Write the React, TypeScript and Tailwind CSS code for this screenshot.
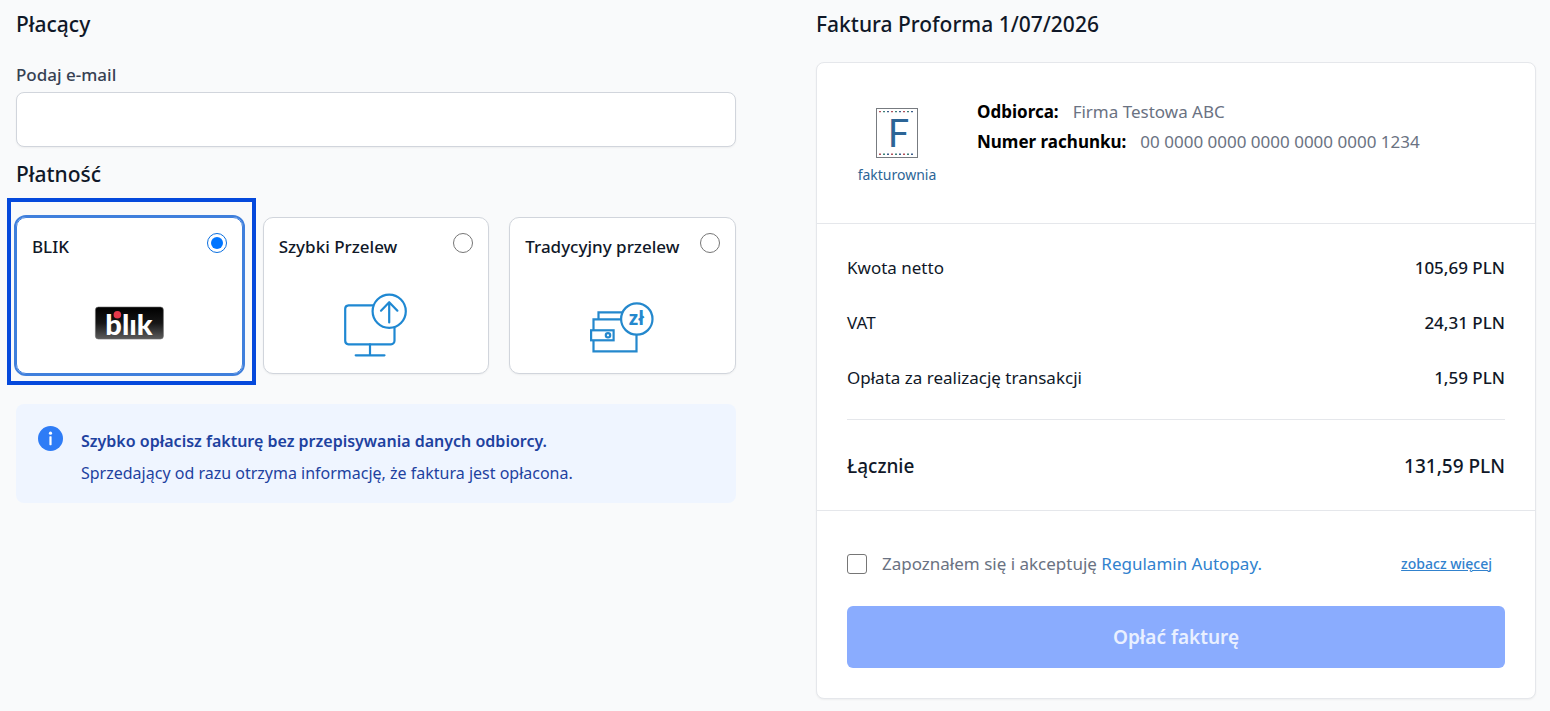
import { useState, type ReactNode } from "react";

function BlikLogo() {
  return (
    <svg width="70" height="38" viewBox="0 0 70 38" role="img" aria-label="BLIK">
      <defs>
        <linearGradient id="blik-bg" x1="0" y1="0" x2="0" y2="1">
          <stop offset="0" stopColor="#000000" />
          <stop offset="0.5" stopColor="#161616" />
          <stop offset="1" stopColor="#5c5c5c" />
        </linearGradient>
      </defs>
      <rect x="1.4" y="1" width="68" height="32" rx="3" fill="url(#blik-bg)" stroke="#6b6b6b" strokeWidth="0.6" />
      <text x="35" y="28.5" textAnchor="middle" fill="#ffffff" fontSize="29" fontWeight="900" fontFamily="Lato, sans-serif">
        blık
      </text>
      <circle cx="23.4" cy="8.8" r="3.8" fill="#e5394a" />
    </svg>
  );
}

function TransferIcon() {
  return (
    <svg width="64" height="64" viewBox="0 0 64 64" fill="none" stroke="#1f88d2" strokeWidth="2.2" strokeLinecap="round" strokeLinejoin="round" aria-hidden="true">
      <path d="M29 12.3H4.5A3.5 3.5 0 0 0 1.2 15.8V47.8A3.5 3.5 0 0 0 4.5 51.3H47A3.5 3.5 0 0 0 50.5 47.8V35" />
      <circle cx="45.2" cy="18.3" r="16.6" />
      <path d="M45.2 29.5V9.5M37 17.7L45.2 9.2L53.4 17.7M26 51.3V62M11.7 62.3H40.5" />
    </svg>
  );
}

function WalletIcon() {
  return (
    <svg width="64" height="64" viewBox="1 0 64 64" fill="none" stroke="#2488cd" strokeWidth="2.2" className="overflow-visible" aria-hidden="true">
      <path d="M8.5 26.3V19.3H32.5" />
      <path d="M31.5 26.3H3.5V58.3H46.5V42" />
      <rect x="1.1" y="37.3" width="22.5" height="10" fill="#ffffff" />
      <circle cx="18" cy="42.3" r="2.2" />
      <circle cx="46.8" cy="26" r="15.7" fill="#ffffff" />
      <text x="46.4" y="32.3" textAnchor="middle" fill="#2488cd" stroke="none" fontSize="19" fontWeight="700" fontFamily="'Noto Sans', sans-serif">
        zł
      </text>
    </svg>
  );
}

function FakturowniaLogo() {
  return (
    <svg width="42" height="50" viewBox="0 0 42 50" fill="none" aria-hidden="true">
      <rect x="0.5" y="0.5" width="41" height="49" stroke="#777b80" />
      <g strokeWidth="1.4">
        <path d="M3 3.6H39M3 46.2H39" stroke="#b0525c" strokeDasharray="2 10" />
        <path d="M7 3.6H39M7 46.2H39" stroke="#3f8078" strokeDasharray="2 10" />
        <path d="M11 3.6H39M11 46.2H39" stroke="#3d5f8d" strokeDasharray="2 10" />
      </g>
      <text x="22.5" y="39" textAnchor="middle" fill="#2c6596" fontSize="38" fontWeight="400" fontFamily="Lato, sans-serif">
        F
      </text>
    </svg>
  );
}

const methods: { id: string; name: string; icon: ReactNode }[] = [
  { id: "blik", name: "BLIK", icon: <BlikLogo /> },
  { id: "fast", name: "Szybki Przelew", icon: <TransferIcon /> },
  { id: "traditional", name: "Tradycyjny przelew", icon: <WalletIcon /> },
];

const amounts = [
  { label: "Kwota netto", value: "105,69 PLN" },
  { label: "VAT", value: "24,31 PLN" },
  { label: "Opłata za realizację transakcji", value: "1,59 PLN" },
];

function PaymentMethods() {
  const [selected, setSelected] = useState("blik");

  return (
    <div className="grid grid-cols-3 gap-5">
      {methods.map((method) => {
        const active = method.id === selected;
        return (
          <div key={method.id} className="relative">
            {/* Highlight frame */}
            {active && <div className="absolute -left-[9px] -right-[13px] -top-[19px] -bottom-[11px] border-4 border-[#0549dc] pointer-events-none" />}
            <label
              className={
                active
                  ? "flex flex-col justify-between h-[157px] px-[15px] pt-[15px] pb-4 rounded-[10px] bg-white border border-[#3f7fdc] outline-2 outline-[#3f7fdc] cursor-pointer"
                  : "flex flex-col justify-between h-[157px] px-[15px] pt-[15px] pb-4 rounded-[10px] bg-white border border-gray-300 shadow-xs cursor-pointer"
              }
            >
              <span className="flex justify-between">
                <span className="text-[17px] leading-7 font-medium text-gray-900 whitespace-nowrap">{method.name}</span>
                <input
                  type="radio"
                  name="method"
                  checked={active}
                  onChange={() => setSelected(method.id)}
                  className="appearance-none shrink-0 w-5 h-5 rounded-full bg-white border border-[#767676] checked:border-[#0a6fe0] checked:bg-[#0075ff] checked:bg-clip-content checked:p-[3px]"
                />
              </span>
              <span className="flex h-16 items-center justify-center">{method.icon}</span>
            </label>
          </div>
        );
      })}
    </div>
  );
}

function Payer() {
  return (
    <section>
      <h2 className="text-[21px] leading-8 font-medium text-gray-900">Płacący</h2>
      <label htmlFor="email" className="block mt-[21px] text-[17px] leading-7 font-medium text-gray-700">
        Podaj e-mail
      </label>
      <input id="email" type="email" className="block w-full h-[55px] mt-[3px] px-4 rounded-lg border border-gray-300 bg-white shadow-xs text-[17px]" />
      <h2 className="mt-[11px] mb-[27px] text-[21px] leading-8 font-medium text-gray-900">Płatność</h2>
      <PaymentMethods />
      <div className="flex gap-[18px] mt-[30px] pl-[22px] pr-4 pt-[21px] pb-3.5 rounded-lg bg-[#eff5ff]">
        <svg width="25" height="25" viewBox="0 0 25 25" className="shrink-0 mt-px" aria-hidden="true">
          <circle cx="12.5" cy="12.5" r="12.5" fill="#2e7cf6" />
          <circle cx="12.5" cy="7.2" r="1.6" fill="#ffffff" />
          <rect x="11.4" y="10.2" width="2.2" height="9" rx="0.6" fill="#ffffff" />
        </svg>
        <div className="text-base leading-8 text-[#1e429f]">
          <p className="font-semibold">Szybko opłacisz fakturę bez przepisywania danych odbiorcy.</p>
          <p>Sprzedający od razu otrzyma informację, że faktura jest opłacona.</p>
        </div>
      </div>
    </section>
  );
}

function Invoice() {
  const [accepted, setAccepted] = useState(false);

  return (
    <section>
      <h2 className="text-[21px] leading-8 font-medium text-gray-900">Faktura Proforma 1/07/2026</h2>
      <div className="mt-[22px] rounded-lg border border-gray-200 bg-white shadow-xs">
        <div className="flex gap-[30px] px-[30px] pt-px pb-9 border-b border-gray-200">
          <div className="flex flex-col items-center w-[100px] pt-11">
            <FakturowniaLogo />
            <span className="mt-1 text-[14px] leading-[25px] text-[#2c6596]">fakturownia</span>
          </div>
          <dl className="pt-[33px] text-[17px] leading-[30px] text-gray-500">
            <div className="flex gap-[14px]">
              <dt className="font-bold text-black">Odbiorca:</dt>
              <dd>Firma Testowa ABC</dd>
            </div>
            <div className="flex gap-[14px]">
              <dt className="font-bold text-black">Numer rachunku:</dt>
              <dd>00 0000 0000 0000 0000 0000 1234</dd>
            </div>
          </dl>
        </div>

        <div className="px-[30px] pt-[30px] pb-[30px] border-b border-gray-200">
          <dl className="flex flex-col gap-[27px] text-[17px] leading-7 text-gray-900">
            {amounts.map((row) => (
              <div key={row.label} className="flex justify-between">
                <dt>{row.label}</dt>
                <dd className="font-medium">{row.value}</dd>
              </div>
            ))}
            <div className="flex justify-between pt-8 border-t border-gray-200 text-[19px] font-medium">
              <dt>Łącznie</dt>
              <dd>131,59 PLN</dd>
            </div>
          </dl>
        </div>

        <div className="px-[30px] pt-[39px] pb-[30px]">
          <div className="flex items-center gap-[15px] text-[17px] leading-7 text-gray-500">
            <input
              id="terms"
              type="checkbox"
              checked={accepted}
              onChange={(e) => setAccepted(e.target.checked)}
              className="appearance-none w-5 h-5 rounded-[3px] border border-[#767676] bg-white checked:bg-[#0075ff]"
            />
            <label htmlFor="terms">
              Zapoznałem się i akceptuję{" "}
              <a href="#regulamin" className="text-[#3182ce]">
                Regulamin Autopay.
              </a>
            </label>
            <a href="#wiecej" className="ml-auto mr-[13px] text-[14px] font-medium text-[#3182ce] underline">
              zobacz więcej
            </a>
          </div>
          <button type="button" className="block w-full mt-7 h-[62px] rounded-md bg-[#8aacfe] text-[19px] font-semibold text-[#e9f0ff]">
            Opłać fakturę
          </button>
        </div>
      </div>
    </section>
  );
}

export default function App() {
  return (
    <main className="min-h-screen grid grid-cols-2 gap-20 pl-4 pr-3.5 pt-2 pb-3 bg-[#f9fafb] font-['Noto_Sans',sans-serif]">
      <Payer />
      <Invoice />
    </main>
  );
}
